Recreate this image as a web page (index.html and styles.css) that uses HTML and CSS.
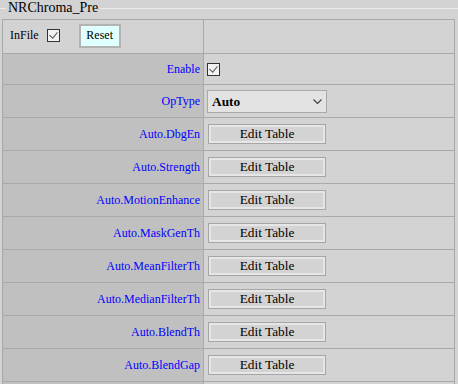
FILE: index.html
```html
<!DOCTYPE html>
<html lang="en">
<head>
<meta charset="UTF-8">
<title>NRChroma_Pre</title>
<link rel="stylesheet" href="styles.css">
</head>
<body>

<fieldset class="panel">
    <legend>NRChroma_Pre</legend>

    <table class="params">
        <tr class="row-head">
            <td class="cell-name">
                <label class="infile">InFile <input type="checkbox" class="chk" checked></label>
                <button class="btn-reset">Reset</button>
            </td>
            <td></td>
        </tr>
        <tr class="row-enable">
            <th>Enable</th>
            <td><input type="checkbox" class="chk" checked></td>
        </tr>
        <tr>
            <th>OpType</th>
            <td>
                <span class="select-wrap">
                    <select class="sel">
                        <option>Auto</option>
                        <option>Manual</option>
                    </select>
                    <svg class="chevron" width="9" height="5" viewBox="0 0 9 5"><path d="M0.5 0.5 L4.5 4.5 L8.5 0.5" fill="none" stroke="#444" stroke-width="1.2"/></svg>
                </span>
            </td>
        </tr>
        <tr>
            <th>Auto.DbgEn</th>
            <td><button class="btn-edit">Edit Table</button></td>
        </tr>
        <tr>
            <th>Auto.Strength</th>
            <td><button class="btn-edit">Edit Table</button></td>
        </tr>
        <tr>
            <th>Auto.MotionEnhance</th>
            <td><button class="btn-edit">Edit Table</button></td>
        </tr>
        <tr>
            <th>Auto.MaskGenTh</th>
            <td><button class="btn-edit">Edit Table</button></td>
        </tr>
        <tr>
            <th>Auto.MeanFilterTh</th>
            <td><button class="btn-edit">Edit Table</button></td>
        </tr>
        <tr>
            <th>Auto.MedianFilterTh</th>
            <td><button class="btn-edit">Edit Table</button></td>
        </tr>
        <tr>
            <th>Auto.BlendTh</th>
            <td><button class="btn-edit">Edit Table</button></td>
        </tr>
        <tr>
            <th>Auto.BlendGap</th>
            <td><button class="btn-edit">Edit Table</button></td>
        </tr>
        <!-- next row starts just under the fold -->
        <tr>
            <th></th>
            <td></td>
        </tr>
    </table>
</fieldset>

</body>
</html>
```

FILE: styles.css
```css
/* page */
body {
    margin: 0;
    background-color: #d3d3d3;
    font-family: "Liberation Serif", "Times New Roman", serif;
    color: #000;
}

.panel {
    margin: 0;
    padding: 0 3px 0 2px;
    border: 0;
    border-top: 1px solid #ececec;
    min-width: 0;
}

.panel legend {
    margin-left: 4px;
    padding: 0 2px;
    font-size: 14px;
    line-height: 16px;
}

/* parameter table */
.params {
    width: 100%;
    margin-top: 3px;
    border-collapse: collapse;
    border: 1px solid #a9a9a9;
    font-size: 12px;
    line-height: 14px;
}

.params th,
.params td {
    border: 1px solid #a9a9a9;
    height: 32px;
    padding: 0 3px;
    vertical-align: middle;
}

.params th {
    width: 194px;
    background-color: #c0c0c0;
    color: #0000ff;
    font-weight: normal;
    text-align: right;
}

.params td.cell-name {
    background-color: #d3d3d3;
}

.params .row-head td {
    height: 33px;
}

.params .row-enable th,
.params .row-enable td {
    height: 30px;
}

.infile {
    margin-left: 4px;
}

/* checkbox */
.chk {
    appearance: none;
    -webkit-appearance: none;
    position: relative;
    width: 13px;
    height: 13px;
    margin: 0;
    border: 1px solid #333;
    background-color: #f2f2f2;
    vertical-align: middle;
}

.infile .chk {
    margin-left: 5px;
    top: -1px;
}

.chk:checked::after {
    content: "";
    position: absolute;
    left: 3px;
    top: 0px;
    width: 4px;
    height: 7px;
    border-right: 1px solid #555;
    border-bottom: 1px solid #555;
    transform: rotate(40deg);
}

/* buttons */
.btn-reset {
    margin-left: 16px;
    width: 42px;
    height: 24px;
    padding: 0;
    border: 2px solid #b3b3b3;
    background-color: #e0ffff;
    font-family: inherit;
    font-size: 12px;
    color: #000;
    vertical-align: middle;
    position: relative;
    top: -1px;
}

.btn-edit {
    margin-left: 1px;
    width: 118px;
    height: 20px;
    padding: 0;
    border: 1px solid #a6a6a6;
    box-shadow: inset 0 0 0 2px #e6e6e6;
    background-color: #d3d3d3;
    font-family: inherit;
    font-size: 13.333px;
    color: #000;
    vertical-align: middle;
}

/* select */
.select-wrap {
    position: relative;
    display: inline-block;
    vertical-align: middle;
}

.sel {
    appearance: none;
    -webkit-appearance: none;
    width: 120px;
    height: 23px;
    margin: 0;
    padding: 0 0 0 4px;
    border: 1px solid #a9a9a9;
    border-radius: 0;
    background-color: #e3e3e3;
    font-family: inherit;
    font-size: 13.333px;
    font-weight: bold;
    color: #000;
    display: block;
}

.chevron {
    position: absolute;
    right: 5px;
    top: 9px;
    pointer-events: none;
}
```
